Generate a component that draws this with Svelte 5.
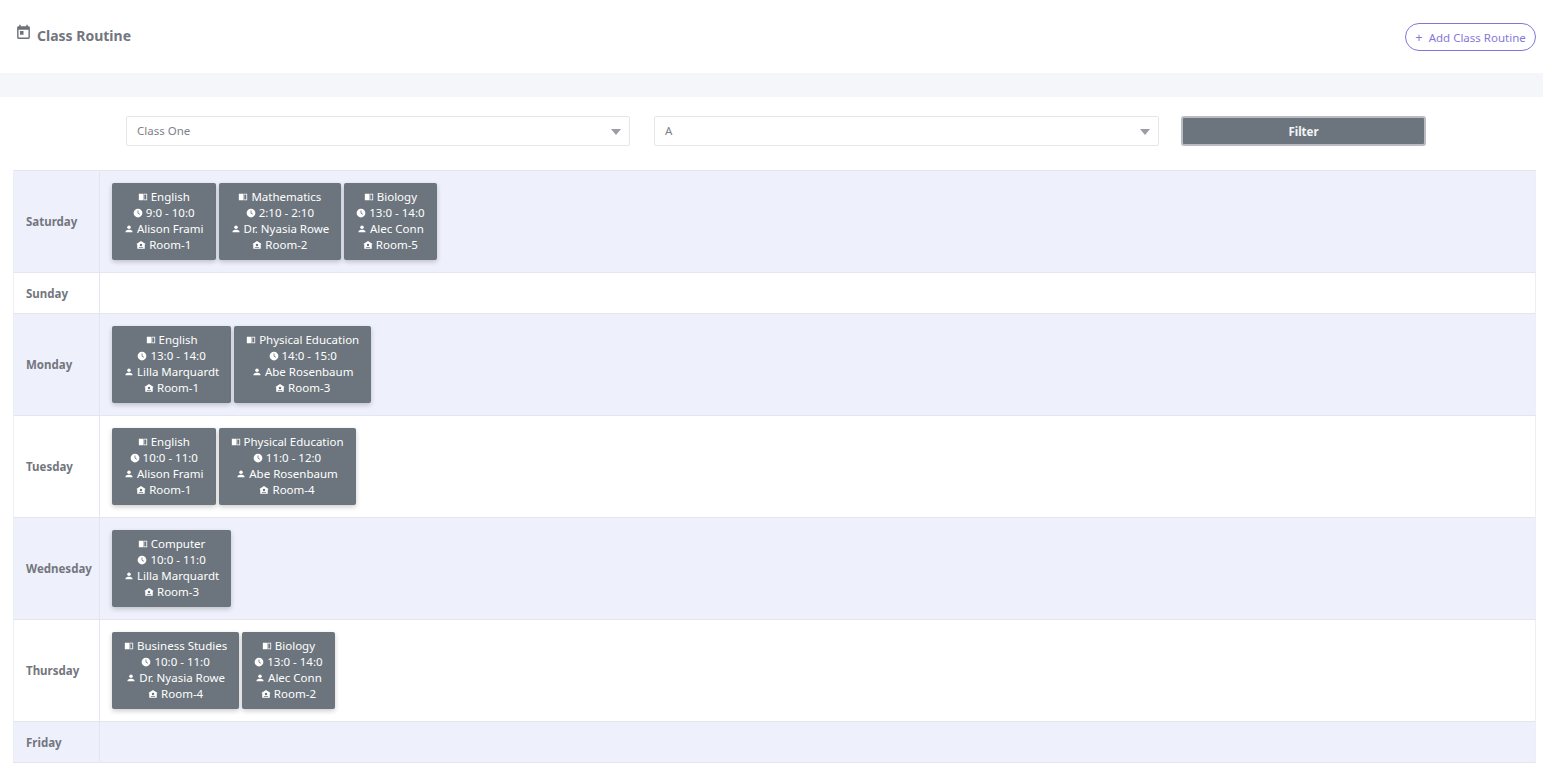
<script>
  const routine = [
    { day: 'Saturday', classes: [
      { subject: 'English', time: '9:0 - 10:0', teacher: 'Alison Frami', room: 'Room-1' },
      { subject: 'Mathematics', time: '2:10 - 2:10', teacher: 'Dr. Nyasia Rowe', room: 'Room-2' },
      { subject: 'Biology', time: '13:0 - 14:0', teacher: 'Alec Conn', room: 'Room-5' }
    ] },
    { day: 'Sunday', classes: [] },
    { day: 'Monday', classes: [
      { subject: 'English', time: '13:0 - 14:0', teacher: 'Lilla Marquardt', room: 'Room-1' },
      { subject: 'Physical Education', time: '14:0 - 15:0', teacher: 'Abe Rosenbaum', room: 'Room-3' }
    ] },
    { day: 'Tuesday', classes: [
      { subject: 'English', time: '10:0 - 11:0', teacher: 'Alison Frami', room: 'Room-1' },
      { subject: 'Physical Education', time: '11:0 - 12:0', teacher: 'Abe Rosenbaum', room: 'Room-4' }
    ] },
    { day: 'Wednesday', classes: [
      { subject: 'Computer', time: '10:0 - 11:0', teacher: 'Lilla Marquardt', room: 'Room-3' }
    ] },
    { day: 'Thursday', classes: [
      { subject: 'Business Studies', time: '10:0 - 11:0', teacher: 'Dr. Nyasia Rowe', room: 'Room-4' },
      { subject: 'Biology', time: '13:0 - 14:0', teacher: 'Alec Conn', room: 'Room-2' }
    ] },
    { day: 'Friday', classes: [] }
  ]
</script>

{#snippet book()}
  <svg class="ico" viewBox="0 0 24 24" fill="currentColor" aria-hidden="true">
    <path d="M2 4h9.5c.5 0 .5.4.5.5V20H2.6a.6.6 0 0 1-.6-.6zM13 4h9v16h-9zm2 2v12h5V6z" />
  </svg>
{/snippet}

{#snippet clock()}
  <svg class="ico" viewBox="0 0 24 24" aria-hidden="true">
    <circle cx="12" cy="12" r="10.5" fill="currentColor" />
    <path d="M12 6v6.5l4.5 2.5" fill="none" stroke="#6c757d" stroke-width="2" />
  </svg>
{/snippet}

{#snippet person()}
  <svg class="ico" viewBox="0 0 24 24" fill="currentColor" aria-hidden="true">
    <circle cx="12" cy="8" r="4.2" />
    <path d="M3.5 20v-1.6c0-3 5.6-4.4 8.5-4.4s8.500 1.400 8.500 4.400V20z" />
  </svg>
{/snippet}

{#snippet school()}
  <svg class="ico" viewBox="0 0 24 24" fill="currentColor" aria-hidden="true">
    <path d="M12 2.500 1 9.500l2 1.300V21h18V10.800l2-1.300zM12 9a3 3 0 1 1 0 6 3 3 0 0 1 0-6zM7 17.500h10V19H7z" />
  </svg>
{/snippet}

<div class="page">
  <header class="top">
    <h1>
      <svg class="cal" viewBox="0 0 24 24" fill="currentColor" aria-hidden="true">
        <path d="M19 3h-1V1h-2v2H8V1H6v2H5a2 2 0 0 0-2 2v14a2 2 0 0 0 2 2h14a2 2 0 0 0 2-2V5a2 2 0 0 0-2-2zm0 16H5V8h14zM7 10h5v5H7z" />
      </svg>
      <span>Class Routine</span>
    </h1>
    <button class="add"><span class="plus">+</span> Add Class Routine</button>
  </header>

  <div class="strip"></div>

  <div class="filters">
    <div class="select">Class One<i class="caret"></i></div>
    <div class="select">A<i class="caret"></i></div>
    <button class="filter">Filter</button>
  </div>

  <div class="table">
    {#each routine as row, i}
      <div class="row" class:odd={i % 2 === 0}>
        <div class="day">{row.day}</div>
        <div class="cell">
          {#each row.classes as c}
            <div class="card">
              <div>{@render book()} {c.subject}</div>
              <div>{@render clock()} {c.time}</div>
              <div>{@render person()} {c.teacher}</div>
              <div>{@render school()} {c.room}</div>
            </div>
          {/each}
        </div>
      </div>
    {/each}
  </div>
</div>

<style>
  :global(body) {
    margin: 0;
    background: #fff;
    font-family: "Noto Sans", "Open Sans", sans-serif;
  }

  .page {
    color: #6c757d;
    font-size: 11.5px;
  }

  .top {
    height: 73px;
    box-sizing: border-box;
    padding: 23px 7px 0 15px;
    display: flex;
    justify-content: space-between;
    align-items: flex-start;
  }

  h1 {
    margin: 0;
    display: flex;
    font-size: 14px;
    font-weight: 700;
    line-height: 20px;
    color: #73767e;
  }

  h1 span {
    margin: 3px 0 0 5px;
  }

  .cal {
    width: 17px;
    height: 19px;
    margin-top: 0;
    color: #6e7178;
  }

  .add {
    width: 131px;
    height: 28px;
    padding: 0;
    background: #fff;
    border: 1px solid #8175d8;
    border-radius: 14px;
    color: #8579d9;
    font: inherit;
    font-size: 11.5px;
  }

  .plus {
    margin-right: 3px;
    font-size: 13px;
  }

  .strip {
    height: 24px;
    background: #f5f6fa;
  }

  .filters {
    display: grid;
    grid-template-columns: 504px 505px 243px;
    column-gap: 24px;
    padding: 19px 0 24px 126px;
    align-items: center;
  }

  .filters > :nth-child(2) {
    margin-right: 0;
  }

  .select {
    position: relative;
    box-sizing: border-box;
    height: 30px;
    line-height: 27px;
    padding-left: 10px;
    border: 1px solid #e4e6ea;
    border-radius: 2px;
    color: #7d8288;
  }

  .caret {
    position: absolute;
    right: 8px;
    top: 12px;
    border-left: 5px solid transparent;
    border-right: 5px solid transparent;
    border-top: 6px solid #9a9ea3;
  }

  .filter {
    height: 30px;
    margin-left: -2px;
    background: #6c757d;
    border: 2px solid #b9bdc3;
    border-radius: 3px;
    color: #f4f5f6;
    font: inherit;
    font-size: 11.5px;
    font-weight: 700;
  }

  .table {
    margin: 0 7px 0 13px;
    border-bottom: 1px solid #e3e6ef;
  }

  .row {
    display: flex;
    border-top: 1px solid #e3e6ef;
    background: #fff;
    border-right: 1px solid #edeff5;
    border-left: 1px solid #edeff5;
  }

  .row.odd {
    background: #eef1fb;
  }

  .day {
    width: 86px;
    flex: none;
    box-sizing: border-box;
    padding-left: 12px;
    display: flex;
    align-items: center;
    border-right: 1px solid #e3e6ef;
    font-weight: 700;
    color: #73767e;
  }

  .cell {
    display: flex;
    gap: 3px;
    min-height: 40px;
    box-sizing: border-box;
    align-items: flex-start;
    padding: 0 12px;
  }

  .card {
    margin: 12px 0;
    padding: 6px 12px 7px;
    background: #6c757d;
    border-radius: 2px;
    box-shadow: 0 2px 5px rgba(0, 0, 0, 0.2);
    color: #fff;
    line-height: 16px;
    text-align: center;
    white-space: nowrap;
  }

  .ico {
    width: 10px;
    height: 10px;
    vertical-align: -1px;
  }
</style>
